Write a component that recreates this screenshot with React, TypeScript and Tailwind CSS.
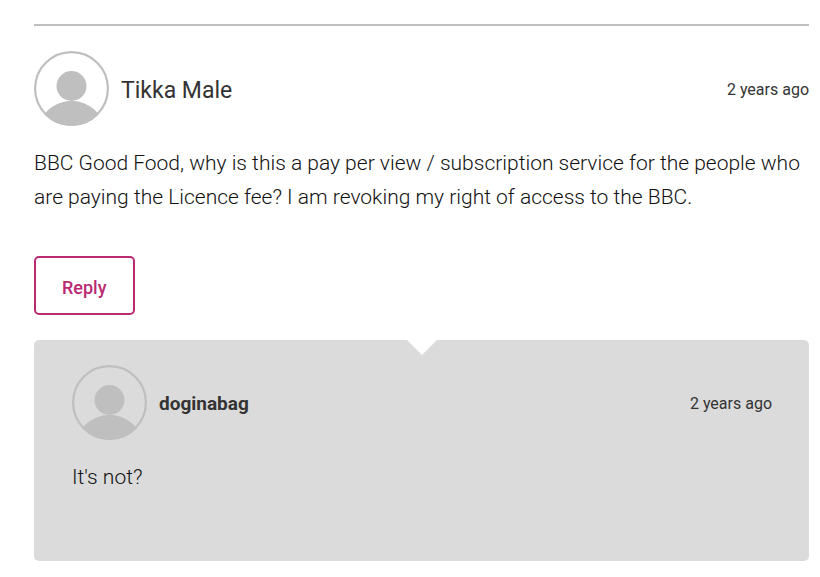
type CommentProps = {
  author: string;
  time: string;
  text: string;
  nested?: boolean;
};

function Avatar() {
  return (
    <svg viewBox="0 0 75 75" className="size-[75px] shrink-0" aria-hidden="true">
      <defs>
        <clipPath id="avatar-clip">
          <circle cx="37.5" cy="37.5" r="37.5" />
        </clipPath>
      </defs>
      <circle cx="37.5" cy="37.5" r="36.4" fill="none" stroke="#bfbfbf" strokeWidth="2.2" />
      <circle cx="37.5" cy="35" r="15" fill="#bfbfbf" />
      <circle cx="37.5" cy="84" r="34.2" fill="#bfbfbf" clipPath="url(#avatar-clip)" />
    </svg>
  );
}

function Comment({ author, time, text, nested = false }: CommentProps) {
  return (
    <>
      <header className="flex items-center gap-3">
        <Avatar />
        <h3 className={nested ? "grow pt-0.5 text-[19px] leading-6 font-bold" : "grow pt-1 text-[23px] leading-8"}>
          {author}
        </h3>
        <time className="pt-0.5 text-[16px] leading-6">{time}</time>
      </header>
      <p className="mt-5 text-[21px] leading-[34px] font-light text-[#111111]">{text}</p>
    </>
  );
}

export default function App() {
  return (
    <main className="bg-white pt-6 pr-[11px] pb-4 pl-[34px] font-[Roboto,sans-serif] text-[#333333]">
      <article className="border-t-2 border-[#bfbfbf] pt-[25px]">
        <Comment
          author="Tikka Male"
          time="2 years ago"
          text="BBC Good Food, why is this a pay per view / subscription service for the people who are paying the Licence fee? I am revoking my right of access to the BBC."
        />
        <button
          type="button"
          className="mt-[42px] block rounded-[5px] border-2 border-[#b92a72] px-[26px] pt-[17px] pb-[13px] text-[18px] leading-[25px] font-medium text-[#b92a72]"
        >
          Reply
        </button>
        <article className="relative mt-[25px] rounded-[5px] bg-[#dbdbdb] pt-[25px] pr-[37px] pb-[67px] pl-[38px]">
          <svg viewBox="0 0 30 15" className="absolute top-0 left-1/2 h-[15px] w-[30px] -translate-x-1/2" aria-hidden="true">
            <path d="M0 0h30L15 15z" fill="#ffffff" />
          </svg>
          <Comment nested author="doginabag" time="2 years ago" text="It's not?" />
        </article>
      </article>
    </main>
  );
}
